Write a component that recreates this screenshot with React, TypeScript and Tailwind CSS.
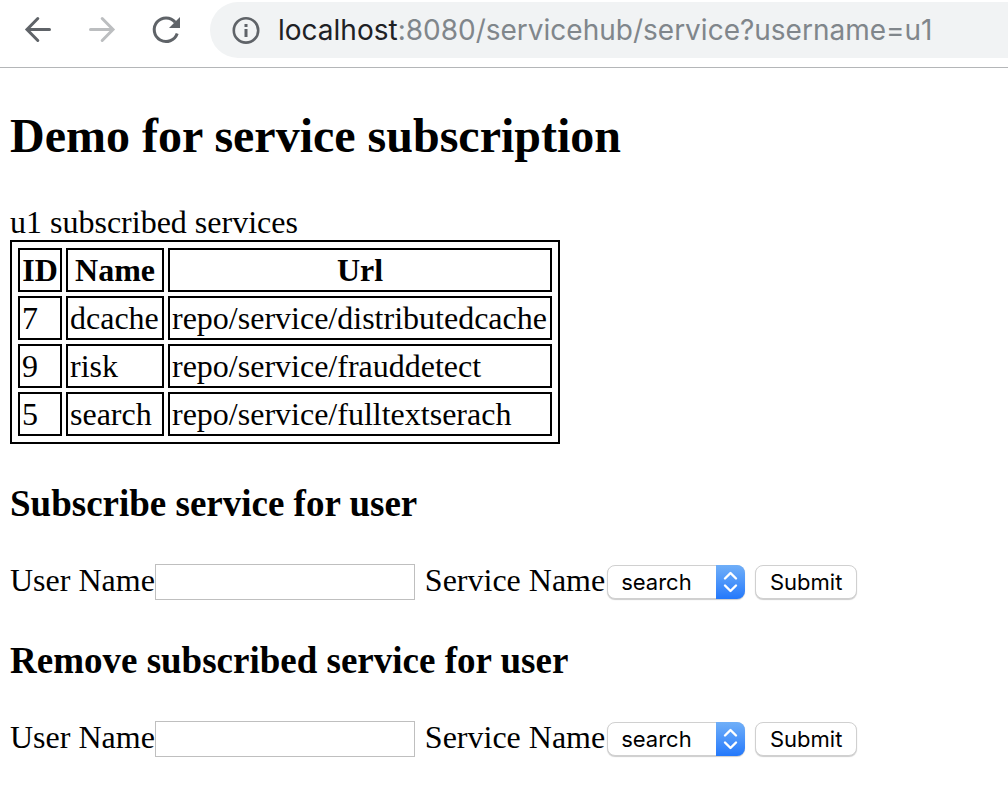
import { useId } from "react";

const services = [
  { id: 7, name: "dcache", url: "repo/service/distributedcache" },
  { id: 9, name: "risk", url: "repo/service/frauddetect" },
  { id: 5, name: "search", url: "repo/service/fulltextserach" },
];

function Toolbar() {
  return (
    <header className="flex h-[68px] items-start border-b border-[#b4b6b8] bg-white pt-0.5">
      <nav className="flex h-14 shrink-0 items-center gap-8 pr-7 pl-[22px] text-[#5f6368]">
        <button type="button" aria-label="Back">
          <svg className="size-8" viewBox="0 0 32 32" fill="none" stroke="currentColor" strokeWidth="3" strokeLinecap="round">
            <path d="M27.500 15.500H5.500M15.800 4.500 5 15.500l10.800 11" />
          </svg>
        </button>
        <button type="button" aria-label="Forward" className="text-[#bcbec0]" disabled>
          <svg className="size-8" viewBox="0 0 32 32" fill="none" stroke="currentColor" strokeWidth="3" strokeLinecap="round">
            <path d="M4.500 15.500h22M16.200 4.500 27 15.500l-10.800 11" />
          </svg>
        </button>
        <button type="button" aria-label="Reload">
          <svg className="size-8" viewBox="0 0 32 32" fill="none">
            <path d="M25.2 8.3A11.8 11.8 0 1 0 27.2 19.5" stroke="currentColor" strokeWidth="3" />
            <path d="M30 3v11H19z" fill="currentColor" />
          </svg>
        </button>
      </nav>
      <div className="flex h-14 min-w-0 flex-1 items-center gap-[18px] rounded-l-full bg-[#f1f3f4] pl-[22px]">
        <svg className="size-7 shrink-0 text-[#5f6368]" viewBox="0 0 28 28" fill="none">
          <circle cx="14" cy="14.400" r="12.2" stroke="currentColor" strokeWidth="2.6" />
          <path d="M14 8v3M14 13v8" stroke="currentColor" strokeWidth="3" />
        </svg>
        <p className="truncate font-['Inter',sans-serif] text-[28px] leading-9 text-[#80868b]">
          <span className="text-[#202124]">localhost</span>:8080/servicehub/service?username=u1
        </p>
      </div>
    </header>
  );
}

function ServiceForm({ title }: { title: string }) {
  const userId = useId();
  const serviceId = useId();
  return (
    <section>
      <h3 className="text-[37px] leading-[42px] font-bold">{title}</h3>
      <form className="mt-[39px] flex h-9 items-center" onSubmit={(e) => e.preventDefault()}>
        <label htmlFor={userId} className="shrink-0 pb-1">User Name</label>
        <input id={userId} type="text" className="h-9 w-[260px] border border-[#bfbfbf] bg-white px-1 text-[22px]" />
        <label htmlFor={serviceId} className="ml-2.5 shrink-0 pb-1">Service Name</label>
        <span className="relative ml-0.5 flex">
          <select
            id={serviceId}
            defaultValue="search"
            className="h-[34px] w-[138px] appearance-none rounded-lg border border-[#d0d0d0] bg-white pl-[13px] font-['Inter',sans-serif] text-[22px] leading-7 shadow-[0_1px_1px_rgba(0,0,0,0.2)]"
          >
            {services.map((s) => (
              <option key={s.id}>{s.name}</option>
            ))}
          </select>
          <svg
            className="pointer-events-none absolute inset-y-0 right-0 h-[34px] w-[29px] rounded-r-lg bg-linear-to-b from-[#70aff8] to-[#2378fb]"
            viewBox="0 0 29 34"
            fill="none"
            stroke="white"
            strokeWidth="2.4"
            strokeLinecap="round"
            strokeLinejoin="round"
          >
            <path d="M9 13.500l5.500-5.500L20 13.500M9 20.500l5.500 5.500L20 20.500" />
          </svg>
        </span>
        <button
          type="submit"
          className="ml-2.5 h-[34px] w-[102px] rounded-lg border border-[#d0d0d0] bg-white font-['Inter',sans-serif] text-[22px] leading-7 shadow-[0_1px_1px_rgba(0,0,0,0.2)]"
        >
          Submit
        </button>
      </form>
    </section>
  );
}

export default function App() {
  return (
    <div className="min-h-screen bg-white text-black">
      <Toolbar />
      <main className="px-2.5 pt-10 pb-12 font-['Liberation_Serif',serif] text-[32px] leading-9">
        <h2 className="text-[48px] leading-[56px] font-bold">Demo for service subscription</h2>
        <p className="mt-10">u1 subscribed services</p>
        <table className="border-separate border-spacing-1 border-2 border-black p-0.5">
          <thead>
            <tr>
              <th className="w-11 border-2 border-black p-0.5">ID</th>
              <th className="w-[98px] border-2 border-black p-0.5">Name</th>
              <th className="w-96 border-2 border-black p-0.5">Url</th>
            </tr>
          </thead>
          <tbody>
            {services.map((s) => (
              <tr key={s.id}>
                <td className="border-2 border-black p-0.5">{s.id}</td>
                <td className="border-2 border-black p-0.5">{s.name}</td>
                <td className="border-2 border-black p-0.5">{s.url}</td>
              </tr>
            ))}
          </tbody>
        </table>
        <div className="mt-[39px] flex flex-col gap-10">
          <ServiceForm title="Subscribe service for user" />
          <ServiceForm title="Remove subscribed service for user" />
        </div>
      </main>
    </div>
  );
}
